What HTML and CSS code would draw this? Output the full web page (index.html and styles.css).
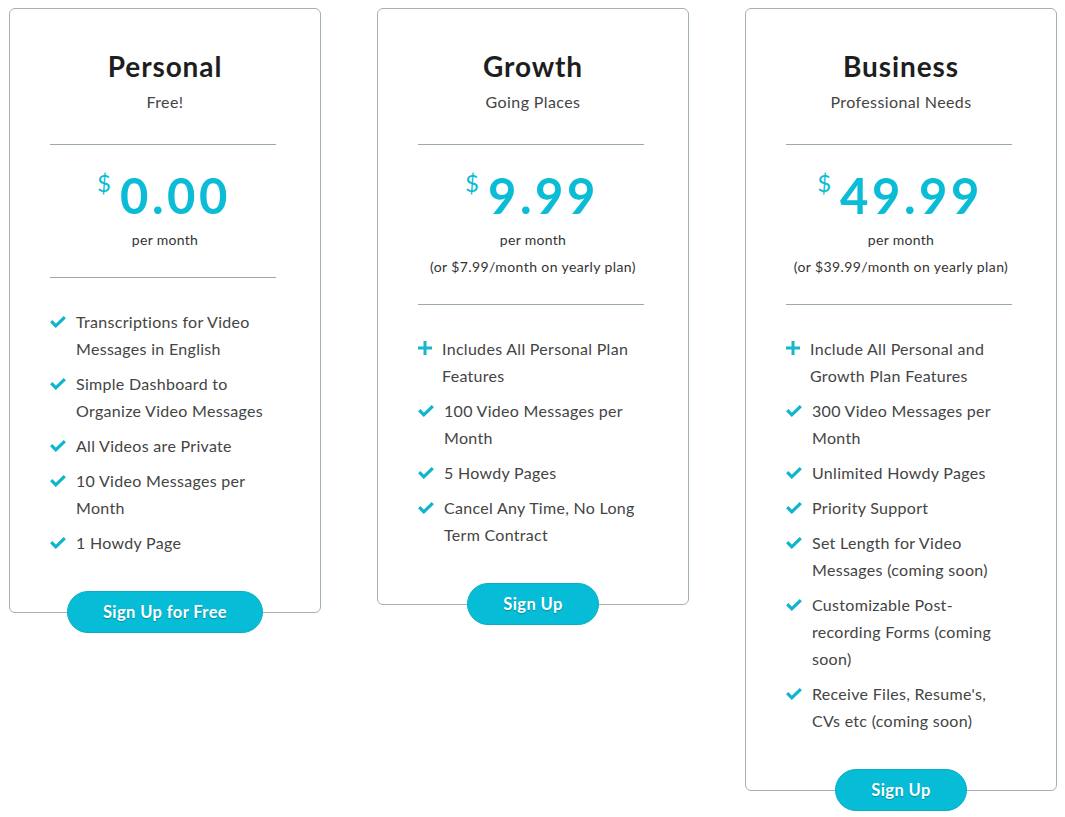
FILE: index.html
```html
<!DOCTYPE html>
<html>
<head>
<meta charset="utf-8">
<link rel="stylesheet" href="styles.css">
</head>
<body>
<div class="plans">
  <div class="card">
    <h2 class="title">Personal</h2>
    <p class="sub">Free!</p>
    <hr class="rule">
    <div class="price"><span class="cur">$</span><span class="amt">0.00</span></div>
    <p class="per">per month</p>
    <hr class="rule rule-b">
    <ul class="features">
      <li><svg class="ic" viewBox="0 0 16 12"><path d="M1.2 5.2l4.6 4.6 9-8.6" fill="none" stroke="#10b4cd" stroke-width="3.2"/></svg><span>Transcriptions for Video Messages in English</span></li>
      <li><svg class="ic" viewBox="0 0 16 12"><path d="M1.2 5.2l4.6 4.6 9-8.6" fill="none" stroke="#10b4cd" stroke-width="3.2"/></svg><span>Simple Dashboard to Organize Video Messages</span></li>
      <li><svg class="ic" viewBox="0 0 16 12"><path d="M1.2 5.2l4.6 4.6 9-8.6" fill="none" stroke="#10b4cd" stroke-width="3.2"/></svg><span>All Videos are Private</span></li>
      <li><svg class="ic" viewBox="0 0 16 12"><path d="M1.2 5.2l4.6 4.6 9-8.6" fill="none" stroke="#10b4cd" stroke-width="3.2"/></svg><span>10 Video Messages per Month</span></li>
      <li><svg class="ic" viewBox="0 0 16 12"><path d="M1.2 5.2l4.6 4.6 9-8.6" fill="none" stroke="#10b4cd" stroke-width="3.2"/></svg><span>1 Howdy Page</span></li>
    </ul>
    <a class="btn">Sign Up for Free</a>
  </div>

  <div class="card">
    <h2 class="title">Growth</h2>
    <p class="sub">Going Places</p>
    <hr class="rule">
    <div class="price"><span class="cur">$</span><span class="amt">9.99</span></div>
    <p class="per">per month</p>
    <p class="per small">(or $7.99/month on yearly plan)</p>
    <hr class="rule rule-b">
    <ul class="features">
      <li><svg class="ic plus" viewBox="0 0 14 14"><path d="M7 0v14M0 7h14" fill="none" stroke="#18b6d0" stroke-width="3"/></svg><span>Includes All Personal Plan Features</span></li>
      <li><svg class="ic" viewBox="0 0 16 12"><path d="M1.2 5.2l4.6 4.6 9-8.6" fill="none" stroke="#10b4cd" stroke-width="3.2"/></svg><span>100 Video Messages per Month</span></li>
      <li><svg class="ic" viewBox="0 0 16 12"><path d="M1.2 5.2l4.6 4.6 9-8.6" fill="none" stroke="#10b4cd" stroke-width="3.2"/></svg><span>5 Howdy Pages</span></li>
      <li><svg class="ic" viewBox="0 0 16 12"><path d="M1.2 5.2l4.6 4.6 9-8.6" fill="none" stroke="#10b4cd" stroke-width="3.2"/></svg><span>Cancel Any Time, No Long Term Contract</span></li>
    </ul>
    <a class="btn">Sign Up</a>
  </div>

  <div class="card">
    <h2 class="title">Business</h2>
    <p class="sub">Professional Needs</p>
    <hr class="rule">
    <div class="price"><span class="cur">$</span><span class="amt">49.99</span></div>
    <p class="per">per month</p>
    <p class="per small">(or $39.99/month on yearly plan)</p>
    <hr class="rule rule-b">
    <ul class="features">
      <li><svg class="ic plus" viewBox="0 0 14 14"><path d="M7 0v14M0 7h14" fill="none" stroke="#18b6d0" stroke-width="3"/></svg><span>Include All Personal and Growth Plan Features</span></li>
      <li><svg class="ic" viewBox="0 0 16 12"><path d="M1.2 5.2l4.6 4.6 9-8.6" fill="none" stroke="#10b4cd" stroke-width="3.2"/></svg><span>300 Video Messages per Month</span></li>
      <li><svg class="ic" viewBox="0 0 16 12"><path d="M1.2 5.2l4.6 4.6 9-8.6" fill="none" stroke="#10b4cd" stroke-width="3.2"/></svg><span>Unlimited Howdy Pages</span></li>
      <li><svg class="ic" viewBox="0 0 16 12"><path d="M1.2 5.2l4.6 4.6 9-8.6" fill="none" stroke="#10b4cd" stroke-width="3.2"/></svg><span>Priority Support</span></li>
      <li><svg class="ic" viewBox="0 0 16 12"><path d="M1.2 5.2l4.6 4.6 9-8.6" fill="none" stroke="#10b4cd" stroke-width="3.2"/></svg><span>Set Length for Video Messages (coming soon)</span></li>
      <li><svg class="ic" viewBox="0 0 16 12"><path d="M1.2 5.2l4.6 4.6 9-8.6" fill="none" stroke="#10b4cd" stroke-width="3.2"/></svg><span>Customizable Post-recording Forms (coming soon)</span></li>
      <li><svg class="ic" viewBox="0 0 16 12"><path d="M1.2 5.2l4.6 4.6 9-8.6" fill="none" stroke="#10b4cd" stroke-width="3.2"/></svg><span>Receive Files, Resume's, CVs etc (coming soon)</span></li>
    </ul>
    <a class="btn">Sign Up</a>
  </div>
</div>
</body>
</html>
```

FILE: styles.css
```css
* { box-sizing: border-box; }
html, body { margin: 0; padding: 0; background: #fff; }
body {
  min-height: 100vh;
  font-family: Lato, "Open Sans", sans-serif;
  color: #444;
}
.plans {
  display: flex;
  align-items: flex-start;
  gap: 56px;
  padding: 8px 9px 40px;
}
.card {
  width: 312px;
  flex: none;
  border: 1px solid #a3b0b8;
  border-radius: 6px;
  padding: 39px 40px 0;
  display: flex;
  flex-direction: column;
  align-items: stretch;
  text-align: center;
}
.title {
  margin: 0;
  font-size: 28px;
  line-height: 36px;
  font-weight: 700;
  color: #1e1e1e;
  letter-spacing: 0.9px;
}
.sub {
  margin: 6px 0 0;
  font-size: 16px;
  line-height: 24px;
  color: #444;
  letter-spacing: 0.4px;
}
.rule {
  margin: 30px 4px 0 0;
  border: 0;
  border-top: 1px solid #9aa8b0;
  height: 0;
}
.rule-b { margin-top: 24px; }
.price {
  margin-top: 22px;
  display: flex;
  justify-content: center;
  align-items: flex-start;
  color: #0bbcd6;
  height: 56px;
  padding-right: 2px;
}
.cur {
  font-size: 24px;
  line-height: 32px;
  margin-right: 9px;
}
.amt {
  font-size: 49px;
  line-height: 56px;
  font-weight: 700;
  letter-spacing: 3.5px;
}
.per {
  margin: 3px 0 0;
  font-size: 14px;
  line-height: 27px;
  color: #333;
  letter-spacing: 0.3px;
}
.per.small {
  margin-top: 0;
  font-size: 14px;
  letter-spacing: 0.4px;
}
.features {
  list-style: none;
  margin: 30px 0 0;
  padding: 0;
  text-align: left;
}
.features li {
  display: flex;
  align-items: flex-start;
  font-size: 16px;
  line-height: 27px;
  color: #444;
  margin-bottom: 8px;
  letter-spacing: 0.3px;
}
.features li:last-child { margin-bottom: 0; }
.ic {
  flex: none;
  width: 16px;
  height: 12px;
  margin: 8px 10px 0 0;
}
.ic.plus {
  width: 14px;
  height: 14px;
  margin: 6px 10px 0 0;
}
.btn {
  align-self: center;
  display: block;
  margin: 35px 0 -21px;
  height: 42px;
  line-height: 40px;
  padding: 0 35px;
  border-radius: 21px;
  background: #06bcd6;
  border: 1px solid #0aaec6;
  color: #fff;
  font-weight: 700;
  font-size: 16.5px;
  letter-spacing: 0.4px;
  text-shadow: 0 1px 1px rgba(0,0,0,0.25);
  cursor: pointer;
}
```
